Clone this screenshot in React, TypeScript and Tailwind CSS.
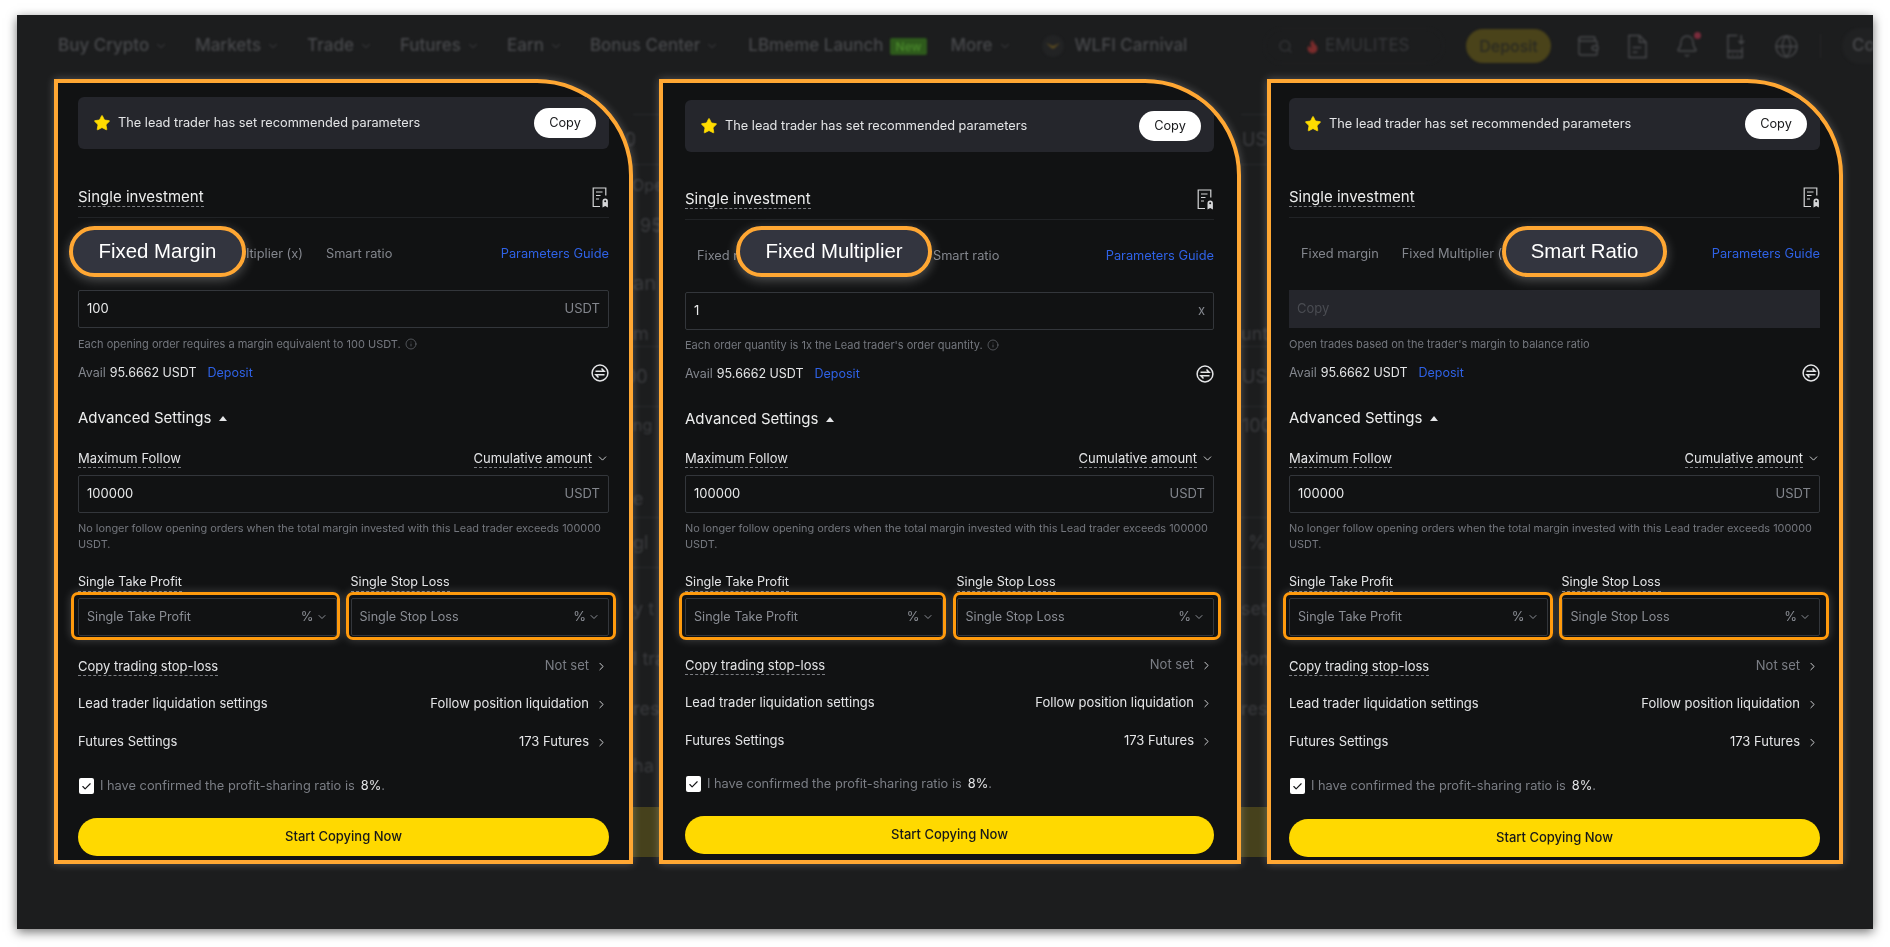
import React from 'react';
import { Bell, Check, ChevronDown, ChevronRight, Flame, Globe, Info, Search, Star, Wallet } from 'lucide-react';

const panels = [
  {
    width: 'w-[579px]', pad: 'pl-[20px] pr-[20px] pt-[14px]', singleMt: 'mt-[29px]',
    tabsH: 'h-[72px]', helperH: 'h-[32px]', availH: 'h-[26px]', advMt: 'mt-[9px]', maxH: 'h-[34px]',
    labelMt: 'mt-[20px]', rowsMt: 'mt-[11px]', checkMt: 'mt-[10px]', btnMt: 'mt-[17px]',
    pill: 'left-[-9px] top-[8px] w-[177px]', pillText: 'Fixed Margin',
    boxA: '-left-[7px] -right-[3px]', boxB: '-left-[5px] -right-[7px]',
    value: '100', unit: 'USDT', helper: 'Each opening order requires a margin equivalent to 100 USDT.', showInfo: true,
  },
  {
    width: 'w-[582px]', pad: 'pl-[22px] pr-[23px] pt-[17px]', singleMt: 'mt-[28px]',
    tabsH: 'h-[72px]', helperH: 'h-[30px]', availH: 'h-[28px]', advMt: 'mt-[8px]', maxH: 'h-[33px]',
    labelMt: 'mt-[20px]', rowsMt: 'mt-[10px]', checkMt: 'mt-[9px]', btnMt: 'mt-[17px]',
    pill: 'left-[51px] top-[6px] w-[196px]', pillText: 'Fixed Multiplier',
    boxA: '-left-[6px] -right-[3px]', boxB: '-left-[4px] -right-[7px]',
    value: '1', unit: 'x', helper: "Each order quantity is 1x the Lead trader's order quantity.", showInfo: true,
  },
  {
    width: 'w-[576px]', pad: 'pl-[18px] pr-[19px] pt-[15px]', singleMt: 'mt-[28px]',
    tabsH: 'h-[72px]', helperH: 'h-[32px]', availH: 'h-[26px]', advMt: 'mt-[9px]', maxH: 'h-[34px]',
    labelMt: 'mt-[20px]', rowsMt: 'mt-[11px]', checkMt: 'mt-[10px]', btnMt: 'mt-[18px]',
    pill: 'left-[213px] top-[8px] w-[165px]', pillText: 'Smart Ratio',
    boxA: '-left-[6px] -right-[5px]', boxB: '-left-[3px] -right-[9px]',
    value: '', unit: '', helper: "Open trades based on the trader's margin to balance ratio", showInfo: false,
  },
];

// what shows of the page behind, between the framed panels
const gapOne = [
  { cls: 'h-[36px] border-b', text: '' },
  { cls: 'h-[50px] border-b', text: '100', shift: '-ml-[27px]' },
  { cls: 'h-[40px]', text: 'Open', shift: '-ml-[1px] text-[16px]' },
  { cls: 'h-[40px]', text: '95', shift: 'ml-[7px]' },
  { cls: 'h-[76px]', text: 'an', shift: 'text-[20px]' },
  { cls: 'h-[26px] border-b', text: 'm', shift: '' },
  { cls: 'h-[60px] border-b', text: '00', shift: '-ml-[8px]' },
  { cls: 'h-[36px]', text: 'ng', shift: 'text-[16px]' },
  { cls: 'h-[37px]', text: '' },
  { cls: 'h-[38px] border-b', text: 'e', shift: '' },
  { cls: 'h-[50px] border-b', text: 'gl', shift: '' },
  { cls: 'h-[80px]', text: 'y t', shift: '' },
  { cls: 'h-[20px]', text: 'l tra', shift: '' },
  { cls: 'h-[80px]', text: 'res', shift: '' },
  { cls: 'h-[34px]', text: 'ha', shift: '' },
  { cls: 'h-[25px]', text: '' },
];

const gapTwo = [
  { cls: 'h-[36px] border-b', text: '' },
  { cls: 'h-[50px] border-b', text: 'USD', shift: 'ml-[1px]' },
  { cls: 'h-[156px]', text: '' },
  { cls: 'h-[26px] border-b', text: 'unt', shift: '' },
  { cls: 'h-[60px] border-b', text: 'USD', shift: 'ml-[1px]' },
  { cls: 'h-[36px]', text: '100', shift: 'ml-[1px]' },
  { cls: 'h-[75px] border-b', text: '' },
  { cls: 'h-[50px] border-b', text: '%', shift: 'ml-[7px]' },
  { cls: 'h-[80px]', text: 'set', shift: '' },
  { cls: 'h-[20px]', text: 'tion', shift: '-ml-[3px]' },
  { cls: 'h-[80px]', text: 'res', shift: '' },
  { cls: 'h-[59px]', text: '' },
];

function PageBehind({ rows }: { rows: { cls: string; text: string; shift?: string }[] }) {
  return (
    <div className="w-[26px] shrink-0 flex flex-col">
      {rows.map((r, i) => (
        <div key={i} className={`${r.cls} shrink-0 flex items-center border-[#2a2b2d] text-[18px] text-[#3b3c3f] whitespace-nowrap blur-[0.8px]`}>
          {r.text && <span className={r.shift}>{r.text}</span>}
        </div>
      ))}
      <div className="h-[50px] shrink-0 bg-[#46411c]"></div>
    </div>
  );
}

function NavItem({ label }: { label: string }) {
  return (
    <div className="flex items-center gap-[5px]">
      <span>{label}</span>
      <ChevronDown className="w-[14px] h-[14px]" strokeWidth={1.5} />
    </div>
  );
}

function TopNav() {
  return (
    <div className="h-[62px] mb-[2px] shrink-0 flex items-center pl-[41px] text-[17px] font-medium text-[#48494c] whitespace-nowrap blur-[0.8px]">
      <div className="flex items-center gap-[27px]">
        <NavItem label="Buy Crypto" />
        <NavItem label="Markets" />
        <NavItem label="Trade" />
        <NavItem label="Futures" />
        <NavItem label="Earn" />
        <div className="mr-[2px]"><NavItem label="Bonus Center" /></div>
        <div className="flex items-center gap-[6px] -mr-[4px]">
          <span>LBmeme Launch</span>
          <span className="bg-[#2e5a1c] text-[#4b8a2c] text-[12px] leading-[17px] px-[6px] rounded-[2px]">New</span>
        </div>
        <NavItem label="More" />
      </div>
      <div className="ml-[30px] flex items-center gap-[11px]">
        <svg viewBox="0 0 22 22" className="w-[22px] h-[22px]">
          <circle cx="11" cy="11" r="11" fill="#222324" />
          <path d="M4 8l7 3 7-3-6 5.5h-2z" fill="#5a4a20" />
        </svg>
        <span>WLFI Carnival</span>
      </div>
      <div className="ml-auto flex items-center">
        <div className="w-[180px] h-[36px] rounded-full border border-[#202122] flex items-center gap-[5px] pl-[13px] text-[#37383b]">
          <Search className="w-[15px] h-[15px]" />
          <Flame className="w-[15px] h-[15px] text-[#7a2c2c] fill-[#7a2c2c] ml-[7px]" />
          <span className="font-normal">EMULITES</span>
        </div>
        <div className="ml-[22px] w-[85px] h-[34px] rounded-full bg-[#4a431a] text-[#2a2a22] text-[16px] flex items-center justify-center">Deposit</div>
        <div className="ml-[25px] flex items-center gap-[27px]">
          <Wallet className="w-[24px] h-[24px]" strokeWidth={1.4} />
          <svg viewBox="0 0 22 26" className="w-[21px] h-[25px]" fill="none" stroke="currentColor" strokeWidth="1.5">
            <path d="M2 1.5h11l7 7v16H2z" /><path d="M13 1.5v7h7M6 14h9M6 19h5" />
          </svg>
          <div className="relative">
            <Bell className="w-[24px] h-[24px]" strokeWidth={1.4} />
            <span className="absolute -top-[2px] -right-[2px] w-[7px] h-[7px] rounded-full bg-[#7a2c3c]"></span>
          </div>
          <svg viewBox="0 0 22 26" className="w-[21px] h-[25px]" fill="none" stroke="currentColor" strokeWidth="1.5">
            <path d="M12 1.5H2v23h15v-11M2 18h15M6 21.5h2M11 21.5h2M16 1v9M13 7l3 3 3-3" />
          </svg>
          <Globe className="w-[25px] h-[25px]" strokeWidth={1.3} />
        </div>
        <div className="ml-[21px] w-[1px] h-[24px] bg-[#272829]"></div>
        <div className="ml-[21px] w-[31px] h-[36px] rounded-l-full bg-[#202122] pl-[10px] flex items-center shrink-0 overflow-hidden">Co</div>
      </div>
    </div>
  );
}

function DocIcon() {
  return (
    <svg viewBox="0 0 17 21" className="w-[17px] h-[21px]" fill="none" stroke="#d5d6d8" strokeWidth="1.2">
      <path d="M8 19.5H1.2V1h12.6v7.5" />
      <path d="M4 5h6.5M4 8.5h4.5M4 12h3" />
      <path d="M10.5 20.5v-6.2a2.7 2.7 0 0 1 5.4 0v6.2l-2.7-1.4z" fill="#d5d6d8" stroke="none" />
      <circle cx="13.2" cy="14.3" r="1" fill="#111213" stroke="none" />
    </svg>
  );
}

function SwapIcon() {
  return (
    <svg viewBox="0 0 18 18" className="w-[18px] h-[18px]" fill="none" stroke="#e4e5e7" strokeWidth="1.5">
      <circle cx="9" cy="9" r="7.9" />
      <path d="M4.5 7.3h8.6L10.5 4.6M13.5 10.7H4.9l2.6 2.7" />
    </svg>
  );
}

function Dashed({ children }: { children: React.ReactNode }) {
  return <span className="border-b border-dashed border-[#7b7d82] leading-[18px]">{children}</span>;
}

function Field({ children, unit }: { children: React.ReactNode; unit?: string }) {
  return (
    <div className="h-[38px] border border-[#33363b] rounded-[2px] flex items-center justify-between px-[8px] text-[13px]">
      {children}
      {unit && <span className="text-[#83868d]">{unit}</span>}
    </div>
  );
}

function LinkRow({ label, value, dim, dashed }: { label: string; value: string; dim?: boolean; dashed?: boolean }) {
  return (
    <div className="h-[38px] flex items-center justify-between text-[13px] text-[#e4e5e7]">
      {dashed ? <Dashed>{label}</Dashed> : <span>{label}</span>}
      <div className="flex items-center gap-[6px] pr-[1px]">
        <span className={dim ? 'text-[#7b7e85]' : ''}>{value}</span>
        <ChevronRight className="w-[13px] h-[13px] text-[#cfd0d3]" strokeWidth={1.8} />
      </div>
    </div>
  );
}

function StopField({ label, box }: { label: string; box: string }) {
  return (
    <div>
      <div className="h-[20px] text-[12.6px] text-[#e4e5e7] flex items-end"><Dashed>{label}</Dashed></div>
      <div className="relative mt-[6px]">
        <Field>
          <span className="text-[#8b8e95] text-[12.6px]">{label}</span>
          <span className="flex items-center gap-[2px] text-[#8b8e95]">%<ChevronDown className="w-[12px] h-[12px]" /></span>
        </Field>
        <div className={`absolute ${box} -top-[6px] -bottom-[4px] border-[3px] border-[#ff9a0d] rounded-[7px] shadow-[0_0_10px_rgba(255,255,255,0.22)]`}></div>
      </div>
    </div>
  );
}

function CopyPanel({ p }: { p: (typeof panels)[number] }) {
  return (
    <div className={`${p.width} h-[785px] shrink-0 relative z-10 flex flex-col overflow-hidden border-[4px] border-[#ffa733] rounded-tr-[96px] bg-[#111213] ${p.pad} shadow-[0_0_9px_rgba(255,255,255,0.25)]`}>
      <div className="h-[52px] shrink-0 rounded-[6px] bg-[#25262c] flex items-center justify-between pl-[15px] pr-[13px] text-[12.75px] text-[#e4e5e7]">
        <div className="flex items-center gap-[7px]">
          <Star className="w-[18px] h-[18px] text-[#ffdc00] fill-[#ffdc00]" strokeWidth={1} />
          <span>The lead trader has set recommended parameters</span>
        </div>
        <div className="w-[62px] h-[30px] rounded-full bg-white text-[#17181a] flex items-center justify-center">Copy</div>
      </div>

      <div className={`${p.singleMt} h-[40px] shrink-0 flex items-center justify-between border-b border-[#212326] text-[15px] text-[#eceded]`}>
        <Dashed>Single investment</Dashed>
        <DocIcon />
      </div>

      <div className={`${p.tabsH} shrink-0 relative flex items-center justify-between text-[12.8px] text-[#83868d]`}>
        <div className="flex items-center gap-[23px] pl-[12px]">
          <span>Fixed margin</span>
          <span>Fixed Multiplier (x)</span>
          <span>Smart ratio</span>
        </div>
        <span className="text-[#2f62e6]">Parameters Guide</span>
        <div className={`absolute ${p.pill} h-[51px] rounded-full bg-[#33353f] border-[4px] border-[#ffa733] flex items-center justify-center text-[20.4px] text-white font-['Liberation_Sans',sans-serif] shadow-[0_3px_12px_rgba(255,255,255,0.28)]`}>
          {p.pillText}
        </div>
      </div>

      {p.value ? (
        <Field unit={p.unit}><span className="text-[#e9eaeb]">{p.value}</span></Field>
      ) : (
        <div className="h-[38px] shrink-0 bg-[#25262c] flex items-center px-[8px] text-[13px] text-[#4a4c52]">Copy</div>
      )}

      <div className={`${p.helperH} shrink-0 flex items-center gap-[4px] text-[11px] text-[#74777e]`}>
        <span>{p.helper}</span>
        {p.showInfo && <Info className="w-[12px] h-[12px]" strokeWidth={1.3} />}
      </div>

      <div className={`${p.availH} shrink-0 flex items-center justify-between text-[12.5px]`}>
        <div className="flex items-center">
          <span className="text-[#83868d]">Avail</span>
          <span className="ml-[4px] text-[#e4e5e7]">95.6662 USDT</span>
          <span className="ml-[11px] text-[#2f62e6]">Deposit</span>
        </div>
        <SwapIcon />
      </div>

      <div className={`${p.advMt} h-[46px] shrink-0 flex items-center gap-[8px] text-[15px] text-[#eceded]`}>
        <span>Advanced Settings</span>
        <svg viewBox="0 0 8 5" className="w-[8px] h-[5px]"><polygon points="4,0 8,5 0,5" fill="#e4e5e7" /></svg>
      </div>

      <div className={`${p.maxH} shrink-0 flex items-center justify-between text-[13px] text-[#e4e5e7]`}>
        <Dashed>Maximum Follow</Dashed>
        <div className="flex items-center gap-[4px]">
          <Dashed>Cumulative amount</Dashed>
          <ChevronDown className="w-[13px] h-[13px]" strokeWidth={1.6} />
        </div>
      </div>

      <Field unit="USDT"><span className="text-[#e9eaeb]">100000</span></Field>

      <p className="mt-[7px] text-[10.9px] leading-[16px] text-[#74777e]">
        No longer follow opening orders when the total margin invested with this Lead trader exceeds 100000 USDT.
      </p>

      <div className={`${p.labelMt} grid grid-cols-2 gap-x-[14px]`}>
        <StopField label="Single Take Profit" box={p.boxA} />
        <StopField label="Single Stop Loss" box={p.boxB} />
      </div>

      <div className={p.rowsMt}>
        <LinkRow label="Copy trading stop-loss" value="Not set" dim dashed />
        <LinkRow label="Lead trader liquidation settings" value="Follow position liquidation" />
        <LinkRow label="Futures Settings" value="173 Futures" />
      </div>

      <div className={`${p.checkMt} h-[30px] shrink-0 flex items-center text-[12.8px] text-[#7b7e85]`}>
        <span className="ml-[1px] w-[15px] h-[16px] rounded-[2px] bg-white flex items-center justify-center">
          <Check className="w-[11px] h-[11px] text-[#17181a]" strokeWidth={2.5} />
        </span>
        <span className="ml-[6px]">I have confirmed the profit-sharing ratio is</span>
        <span className="ml-[6px] text-[#e4e5e7]">8%</span>
        <span>.</span>
      </div>

      <div className={`${p.btnMt} h-[38px] shrink-0 rounded-full bg-[#ffd900] flex items-center justify-center text-[13px] font-medium text-[#17181a]`}>
        Start Copying Now
      </div>
    </div>
  );
}

export default function App() {
  return (
    <div className="w-[1890px] h-[947px] bg-white pt-[15px] pl-[17px] overflow-hidden font-['Inter',sans-serif]">
      <div className="w-[1856px] h-[914px] flex flex-col overflow-hidden bg-[#1c1d1e] shadow-[0_3px_10px_rgba(0,0,0,0.55)] blur-[0.35px]">
        <TopNav />
        <div className="flex pl-[37px]">
          <CopyPanel p={panels[0]} />
          <PageBehind rows={gapOne} />
          <CopyPanel p={panels[1]} />
          <PageBehind rows={gapTwo} />
          <CopyPanel p={panels[2]} />
        </div>
      </div>
    </div>
  );
}
